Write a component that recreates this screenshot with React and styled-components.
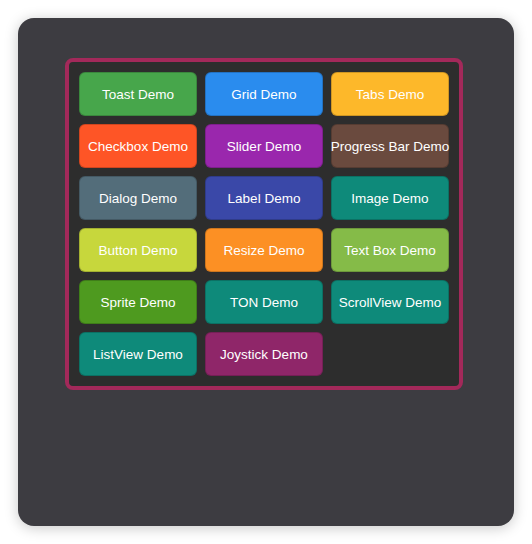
import React from "react";
import styled, { createGlobalStyle } from "styled-components";

const Global = createGlobalStyle`
  html, body { margin: 0; padding: 0; background: #ffffff; }
  body { font-family: "Liberation Sans", Arial, sans-serif; }
`;

const Page = styled.div`
  padding: 18px;
  width: 532px;
  box-sizing: border-box;
`;

const Card = styled.div`
  width: 496px;
  height: 508px;
  box-sizing: border-box;
  background: #3d3c41;
  border-radius: 16px;
  box-shadow: 0 2px 14px rgba(0, 0, 0, 0.22);
  display: flex;
  justify-content: flex-start;
  align-items: flex-start;
  padding: 40px 0 0 47px;
`;

const Panel = styled.div`
  display: grid;
  grid-template-columns: repeat(3, 118px);
  grid-auto-rows: 44px;
  gap: 8px;
  padding: 10px;
  background: #2d2d2d;
  border: 4px solid #a3295a;
  border-radius: 8px;
`;

const DemoButton = styled.button`
  display: flex;
  align-items: center;
  justify-content: center;
  margin: 0;
  padding: 0;
  white-space: nowrap;
  background: ${(p) => p.$bg};
  border: 1px solid rgba(0, 0, 0, 0.18);
  border-radius: 6px;
  color: #ffffff;
  font-family: "Liberation Sans", Arial, sans-serif;
  font-size: 13.5px;
  cursor: pointer;
`;

const demos = [
  ["Toast Demo", "#47a64b"],
  ["Grid Demo", "#2a8cee"],
  ["Tabs Demo", "#fdb82a"],
  ["Checkbox Demo", "#fe5526"],
  ["Slider Demo", "#9a27ad"],
  ["Progress Bar Demo", "#6a4a3e"],
  ["Dialog Demo", "#536d7a"],
  ["Label Demo", "#3a48a8"],
  ["Image Demo", "#0e8a7a"],
  ["Button Demo", "#c7d73c"],
  ["Resize Demo", "#fc9024"],
  ["Text Box Demo", "#85bb48"],
  ["Sprite Demo", "#4e9a1f"],
  ["TON Demo", "#0e8a7a"],
  ["ScrollView Demo", "#0e8a7a"],
  ["ListView Demo", "#0e8a7a"],
  ["Joystick Demo", "#8f2669"],
];

export default function App() {
  return (
    <>
      <Global />
      <Page>
        <Card>
          <Panel>
            {demos.map(([label, bg]) => (
              <DemoButton key={label} $bg={bg}>
                {label}
              </DemoButton>
            ))}
          </Panel>
        </Card>
      </Page>
    </>
  );
}
